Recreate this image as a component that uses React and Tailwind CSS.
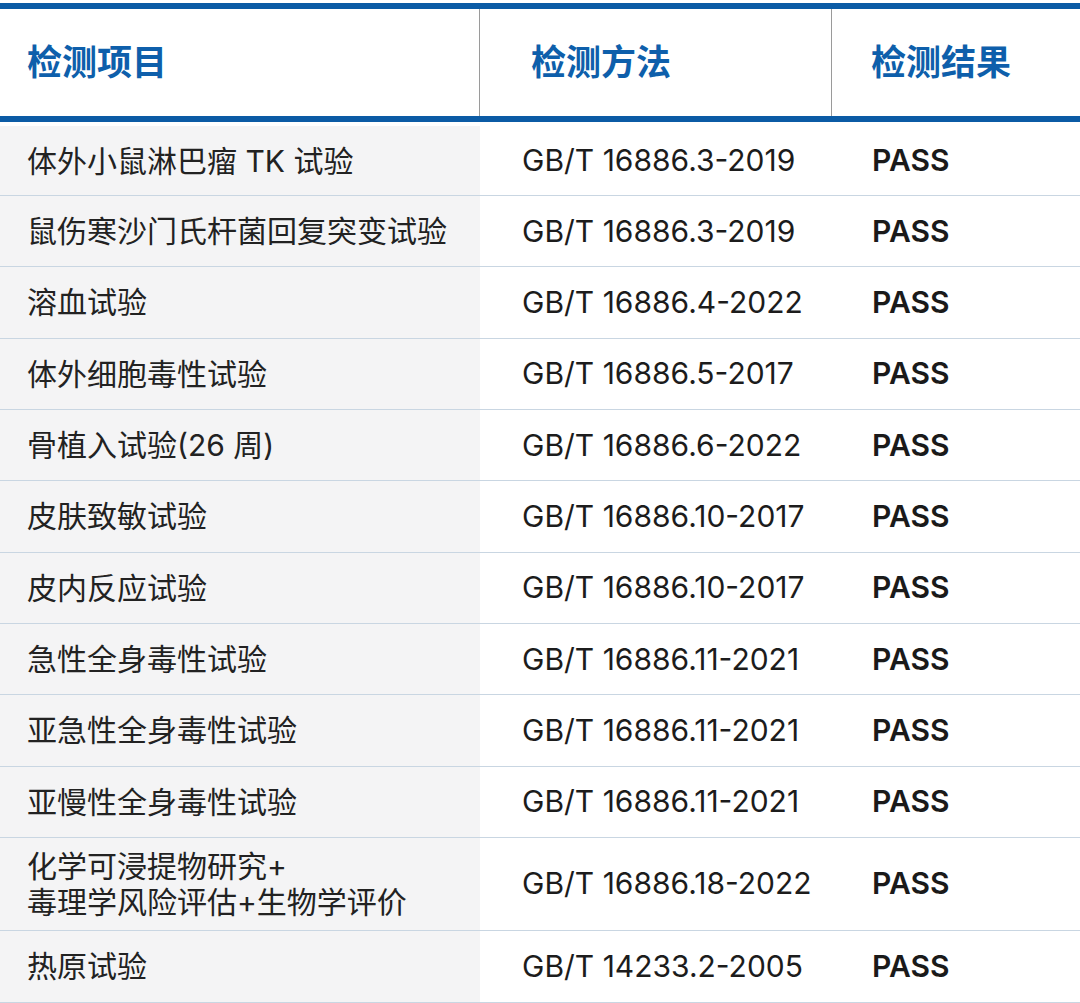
import React from 'react';

const rows = [
  { item: ['体外小鼠淋巴瘤 TK 试验'], method: 'GB/T 16886.3-2019', first: true },
  { item: ['鼠伤寒沙门氏杆菌回复突变试验'], method: 'GB/T 16886.3-2019' },
  { item: ['溶血试验'], method: 'GB/T 16886.4-2022' },
  { item: ['体外细胞毒性试验'], method: 'GB/T 16886.5-2017' },
  { item: ['骨植入试验(26 周)'], method: 'GB/T 16886.6-2022' },
  { item: ['皮肤致敏试验'], method: 'GB/T 16886.10-2017' },
  { item: ['皮内反应试验'], method: 'GB/T 16886.10-2017' },
  { item: ['急性全身毒性试验'], method: 'GB/T 16886.11-2021' },
  { item: ['亚急性全身毒性试验'], method: 'GB/T 16886.11-2021' },
  { item: ['亚慢性全身毒性试验'], method: 'GB/T 16886.11-2021' },
  { item: ['化学可浸提物研究+', '毒理学风险评估+生物学评价'], method: 'GB/T 16886.18-2022', tall: true },
  { item: ['热原试验'], method: 'GB/T 14233.2-2005', last: true },
];

const font = { fontFamily: '"Inter", "Noto Sans CJK SC", sans-serif' };

const rowHeight = (row) => {
  if (row.first) return 'h-[74px] pt-[4px]';
  if (row.tall) return 'h-[93px]';
  if (row.last) return 'h-[72px]';
  return 'h-[71.33px]';
};

const ResultRow = ({ row }) => (
  <div className={`grid grid-cols-[480px_352px_1fr] border-b border-[#c9d6e2] ${rowHeight(row)}`}>
    <div className="bg-[#f4f4f5] flex flex-col justify-center pl-[27px] text-[30px] leading-[36px] text-[#222]">
      {row.item.map((line) => (
        <div key={line}>{line}</div>
      ))}
    </div>
    <div className="flex items-center pl-[42px] text-[30px] text-[#1c1c1c]">
      {row.method}
    </div>
    <div className="flex items-center pl-[40px] text-[30px] font-semibold text-[#1a1a1a]">
      PASS
    </div>
  </div>
);

const App = () => {
  return (
    <div className="w-[1080px] h-[1003px] bg-white overflow-hidden pt-[3px]" style={font}>
      <div className="border-t-[6px] border-[#0b5ba5] border-b-[6px] grid grid-cols-[480px_352px_1fr] h-[119px]">
        <div className="flex items-center pl-[27px] text-[35px] font-bold text-[#0e5fab] border-r border-[#9a9a9a]">
          检测项目
        </div>
        <div className="flex items-center pl-[51px] text-[35px] font-bold text-[#0e5fab] border-r border-[#9a9a9a]">
          检测方法
        </div>
        <div className="flex items-center pl-[39px] text-[35px] font-bold text-[#0e5fab]">
          检测结果
        </div>
      </div>
      {rows.map((row, i) => (
        <ResultRow key={i} row={row} />
      ))}
    </div>
  );
};

export default App;
